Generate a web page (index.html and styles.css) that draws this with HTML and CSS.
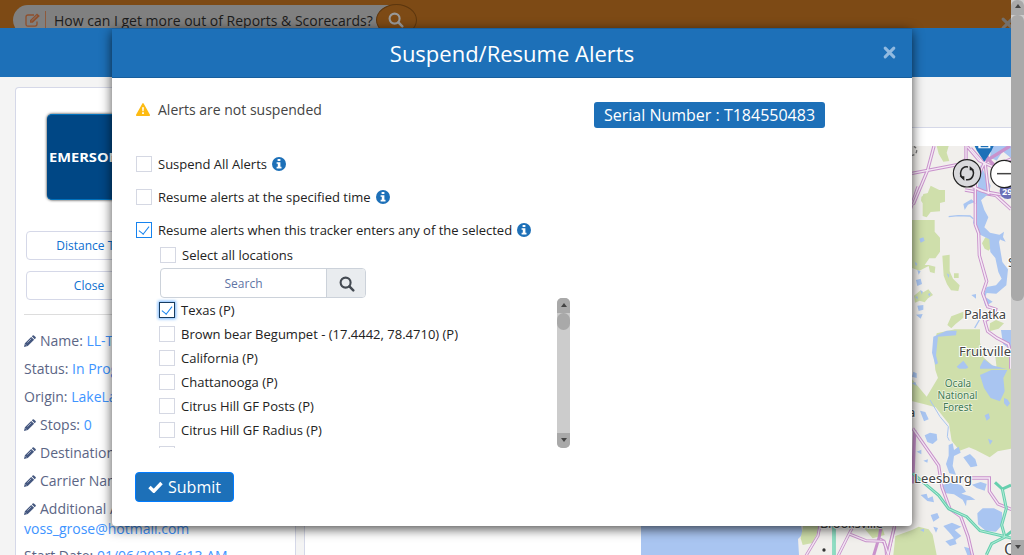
FILE: index.html
```html
<!DOCTYPE html>
<html lang="en">
<head>
<meta charset="utf-8">
<title>Suspend/Resume Alerts</title>
<link rel="stylesheet" href="styles.css">
</head>
<body>
<svg class="defs" width="0" height="0">
  <symbol id="pencil" viewBox="0 0 12 12"><path d="M0 12 L.9 8.2 L7.2 1.9 L10.1 4.8 L3.8 11.1Z M7.8 1.3 L8.7.4 Q9.3-.1 9.9.4 L11.6 2.1 Q12.1 2.7 11.6 3.3 L10.7 4.2Z" fill="currentColor"/><path d="M1.5 9.4 L2.6 10.5 M3.4 7.6 L7.2 3.8" stroke="#fff" stroke-width=".5"/></symbol>
  <symbol id="info" viewBox="0 0 14 14"><circle cx="7" cy="7" r="7" fill="#1d70b8"/><path d="M5.6 2h2.8v2.1H5.600z M4.600 5.200h3.800v4.600h1.100v1.700H4.600V9.800h1.200V6.800H4.600z" fill="#fff"/></symbol>
  <symbol id="glass" viewBox="0 0 16 16"><circle cx="6.6" cy="6.6" r="5" fill="none" stroke="currentColor" stroke-width="2.1"/><path d="M10.4 10.4L14.3 14.3" stroke="currentColor" stroke-width="2.5" stroke-linecap="round"/></symbol>
  <symbol id="cross" viewBox="0 0 12 12"><path d="M2 2L10 10M10 2L2 10" stroke="currentColor" stroke-width="2.8" stroke-linecap="round"/></symbol>
</svg>
<div class="screen">
  <div class="page">
    <div class="banner">
      <div class="ask">
        <svg class="edit" viewBox="0 0 16 14"><path d="M12 8.5v2.6q0 2-2 2H3q-2 0-2-2V4q0-2 2-2h6" fill="none" stroke="currentColor" stroke-width="1.3"/><path d="M5 9.8V7.2L12 .4l2.8 2.6-7 6.8z" fill="currentColor"/><path d="M6.5 7.9L12 2.6" stroke="#808080" stroke-width=".8"/></svg>
        <span class="bar"></span>
        <span class="question">How can I get more out of Reports &amp; Scorecards?</span>
        <span class="go"><svg viewBox="0 0 16 16"><use href="#glass"/></svg></span>
      </div>
      <svg class="dismiss" viewBox="0 0 12 12"><use href="#cross"/></svg>
    </div>
    <div class="topbar"></div>
    <div class="columns">
      <div class="card">
        <div class="logo"><span>EMERSON</span></div>
        <div class="pill">Distance Traveled</div>
        <div class="pill pill-close">Close</div>
        <hr>
        <div class="field"><svg><use href="#pencil"/></svg>Name: <b>LL-Tracker</b></div>
        <div class="field">Status: <b>In Progress</b></div>
        <div class="field">Origin: <b>LakeLand</b></div>
        <div class="field"><svg><use href="#pencil"/></svg>Stops: <b>0</b></div>
        <div class="field"><svg><use href="#pencil"/></svg>Destination:</div>
        <div class="field"><svg><use href="#pencil"/></svg>Carrier Name:</div>
        <div class="field"><svg><use href="#pencil"/></svg>Additional Alerts:</div>
        <div class="field email"><b>voss_grose@hotmail.com</b></div>
        <div class="field date">Start Date: <b>01/06/2023 6:13 AM</b></div>
      </div>
      <div class="panel">
        <div class="strip"></div>
        <div class="mapwrap">
          <svg class="map" viewBox="641 146 370 409">
            <rect x="641" y="146" width="370" height="409" fill="#f1efec"/>
            <path d="M641 500H804l-3 26 2 8-5 5 1 16H641z" fill="#a9c5f1"/>
            <g transform="translate(880 190) scale(.33333)">
              <g fill="#cfdfab">
                <path d="M130 12l18-4 2-8h45v35l-15 4v25l-28 2-12 16-12-4v-38l-5-8z"/>
                <path d="M90 90h74v35l16 18v42l-14 20h-18l-14 20h12l20 5-2 20-14-4-4-18-28 14-28-10zM187 197l22-3v50l10 22 20 20-4 17-22-2-12-18-10-26zM222 250h14v14h-14zM102 317l18-15 10 5 15-9 14 17-15 10-10 12-15-5-14 6zM202 405l12-26 36-14v18l-24 20-12 12zM306 160l10-18 18 6 4 18-12 16-12-6zM330 400l18-10 24 10-16 16-28 8z"/>
                <path d="M170 430l55-12h75v40l10 44 36 32 28-36 19 4v68H176l-10-30-6-60z"/>
                <path d="M345 490l24 10 25 40v30h-40z"/>
              </g>
              <g fill="#a9c5f1">
                <path d="M290-10l23 70 12 22-12 30 17 16 35 8-8 20 10 60 17 22-5 48-30 25-29-2-4 12 22 14-22 14-8-28 12-30 28-5 17-20-10-20-9-42-15-18-3-38-32-16-17-34 8-40-7-60z"/>
                <path d="M250 42l24-14 10 8-20 8-10 16zM358 135l14-10-3 16 8 14-16-6zM363 420h30v60l-24-18zM300 530l12-22 24 18 55 14v30H300zM230 530l20-18 15 20-18 14zM118 146l12-4 4 10-12 6zM108 270l14-4 4 16-14 6zM274 315l14-3v14zM112 347l18-2v14l-14 4zM108 374l20-2-6 14zM188 325l4 10M110 190l10 4M134 195l10-4M148 245l8 10"/>
                <path d="M104 215l8 6-4 8zM112 240l10 4-6 10zM120 300l8 4-2 10zM144 312l8-4-4 12zM106 322l6-4 2 10zM200 250l8 4-2 10zM100 545l10 5v14l-14-4z"/>
                <path d="M160 440l40-18 30 0-2 14-54 4-6 56 6 24-8 4-10-36z"/>
              </g>
              <path d="M206 80l28-3 36 1 10 8M298 390l-14 24" stroke="#a9c5f1" stroke-width="4" fill="none"/>
              <g fill="none" stroke="#c992cc" stroke-width="10"><path d="M286 0v104l10 26 2 66 22 78-12 36 15 40 24 8-6 20-27 14 9 32 28 20 34 18 7 25v80"/><path d="M255 0l92 16 46 42M114-10L90 60"/></g>
              <g fill="none" stroke="#f4e8f4" stroke-width="4.500"><path d="M286 0v104l10 26 2 66 22 78-12 36 15 40 24 8-6 20-27 14 9 32 28 20 34 18 7 25v80M255 0l92 16 46 42M114-10L90 60"/></g>
            </g>
            <g transform="translate(860 0) scale(.33333)">
              <path d="M230 438h36l-6 20 8 25-18 2-14-24zM184 590l18-8 10-25 32 16v27h-60z" fill="#cfdfab"/>
              <path d="M395 438h58v36l-25-20-18 28-20-10zM362 495l30 62-6 24-26 22h-12z" fill="#a9c5f1"/>
              <g fill="none" stroke="#c992cc" stroke-width="10"><path d="M318 438v40l-22 15-140 27M222 438l-20 75-42 100M322 440l36 42 40 18 60-25M332 445l44 50 10 85-58-24M346 610v-65l30-62M322 520q4 45 56 56l80 14M360 438l30 45 50 50M450 438l-80 50"/></g>
              <g fill="none" stroke="#f4e8f4" stroke-width="4"><path d="M318 438v40l-22 15-140 27M222 438l-20 75-42 100M322 440l36 42 40 18 60-25M332 445l44 50 10 85-58-24M346 610v-65l30-62M322 520q4 45 56 56l80 14"/></g>
              <circle cx="156" cy="452" r="14" fill="#e8e6e2" stroke="#777" stroke-width="4" stroke-dasharray="8 6"/>
              <circle cx="443" cy="573" r="24" fill="#6b70b7"/>
              <path d="M344 438h57l-7 15-21 32-23-34z" fill="#1d70b8"/><path d="M355 438h7v4h23v-4h6v7h-36z" fill="#fff"/>
              <circle cx="321" cy="520" r="41" fill="#d9d9dc" stroke="#222" stroke-width="3.500"/>
              <path d="M311 536A19 19 0 0 1 324 501M331 504A19 19 0 0 1 318 539" fill="none" stroke="#222" stroke-width="4.500"/><path d="M299 529l14 0 0 13zM343 511h-14v-13z" fill="#222"/>
              <circle cx="433" cy="522" r="41" fill="#fff" stroke="#222" stroke-width="3.500"/><path d="M411 521h48" stroke="#444" stroke-width="4.500"/>
            </g>
            <g transform="translate(880 370) scale(.33333)">
              <path d="M90 20l50 60 36-60-4-24h221v240l-40 8-24 18-42-22-20-8-28 10-24-30-8-50-40-50-36-10-40-10zM46 498l50-18 20-10 30 8 12 16 12 61H40z" fill="#cfdfab"/>
              <g fill="#a9c5f1">
                <path d="M300 15l34-15h48l-12 24 4 40-14 30-28-10-20-30zM372 84l10 4 8 12-8 10-10-10zM314 136l12-6 4 14-10 8zM324 206l14 6-8 12zM120 122l16 4 10 22-14 6zM134 196l16-8 20 4 2 18-14 12-16-6zM110 245l14-6v14zM130 272l14-4-2 10z"/>
                <path d="M206 225l12-5 4 20 14-10 6 18-20 10-4 30 10 26-20-4-10-28 8-25zM250 262l20-10 16 16 6 20-20 4-10-14zM186 345l34-8 26 10 12 18-14 6 26 8 16 10-26 2-2 18-10-20-26-16-30-4zM276 344l26-8 18 6-6 20-24-8zM292 430l16-15 34 0 24 12 2 36-20 22-30-2-24-20zM122 375l18-4 4 14 14-6 4 18-20-4zM152 435l20-6 6 14-18 12zM190 468l26-10 28 12-20 10 20 18-18 12-14-18zM196 514l28-10 6 18-20 6zM252 530l22 6 8 19h-20zM160 470l14 4-6 14zM96 40l10-4 4 12zM120 480l12-4v10z"/>
              </g>
              <path d="M150 90l30 50 25 30-3 30 6 12" fill="none" stroke="#a9c5f1" stroke-width="3"/>
              <g fill="none" stroke="#c992cc" stroke-width="10"><path d="M98 175l78 112 10 65 24 65 32 22 22 60 14 60M270 324h58v40l26 38 40 16M104 180l-6 160M44 470l-24 90M0 508q20 5 20 50"/></g>
              <g fill="none" stroke="#f4e8f4" stroke-width="4"><path d="M98 175l78 112 10 65 24 65 32 22 22 60 14 60M270 324h58v40l26 38 40 16M44 470l-24 90M0 508q20 5 20 50"/></g>
              <g fill="none" stroke="#66cfae" stroke-width="9"><path d="M98 310l78 66 30 40 54 24 40 42 94 22M393 345l-26 12-22-20M367 357l12 58-14 50 10 36-40 20-16 34M375 500l20-16"/></g>
              <path d="M98 310l78 66 30 40 54 24 40 42 94 22M367 357l12 58-14 50 10 36-40 20-16 34" fill="none" stroke="#b4ecd8" stroke-width="3"/>
            </g>
            <g transform="translate(600 500) scale(.33333)">
              <path d="M610 75h46l-6 28-12 26-30 6-6-20zM784 75h60l10 30-36 10z" fill="#cfdfab"/>
              <g fill="none" stroke="#c992cc" stroke-width="9"><path d="M660 75l-6 32-36 60M762 75l-14 25-34 68M748 102l50 20 54 2 14 44M844 75l-6 35-18 60M884 75l-20 92"/></g>
              <path d="M660 75l-6 32-36 60M762 75l-14 25-34 68M748 102l50 20 54 2 14 44M884 75l-20 92" fill="none" stroke="#f4e8f4" stroke-width="4"/>
              <path d="M702 75v90" stroke="#66cfae" stroke-width="10"/><path d="M702 75v90" stroke="#b4ecd8" stroke-width="3"/>
              <circle cx="672" cy="150" r="5" fill="#333"/>
            </g>
            <g class="places">
              <text x="964" y="319" textLength="42">Palatka</text>
              <text x="959" y="356" textLength="52">Fruitville</text>
              <text x="914" y="483" textLength="58">Leesburg</text>
              <text x="820" y="528" textLength="63">Brooksville</text>
              <text x="908" y="417">a</text>
              <text x="1008" y="267">S</text>
              <text x="1004" y="555" class="big">O</text>
            </g>
            <g class="forest"><text x="958" y="387">Ocala</text><text x="957.500" y="399">National</text><text x="957.500" y="411">Forest</text></g>
            <text x="1002" y="195" class="route">295</text>
          </svg>
        </div>
      </div>
    </div>
  </div>

  <div class="mainscroll">
    <div class="track"><div class="thumb"></div></div>
    <div class="down"></div>
  </div>

  <div class="modal">
    <div class="head"><h1>Suspend/Resume Alerts</h1><svg class="x" viewBox="0 0 12 12"><use href="#cross"/></svg></div>
    <div class="body">
      <div class="status">
        <svg viewBox="0 0 14 13"><path d="M7 .8L13.300 12.200H.7z" fill="#fdbb13" stroke="#fdbb13" stroke-width="1.500" stroke-linejoin="round"/><path d="M6.100 4.200h1.800L7.600 8.300H6.400zM6.100 9.200h1.800v1.700H6.100z" fill="#fff"/></svg>
        <span class="state">Alerts are not suspended</span>
        <span class="serial"><span>Serial Number : T184550483</span></span>
      </div>
      <div class="opt"><i class="box"></i><span>Suspend All Alerts</span><svg><use href="#info"/></svg></div>
      <div class="opt"><i class="box"></i><span>Resume alerts at the specified time</span><svg><use href="#info"/></svg></div>
      <div class="opt"><i class="box on"></i><span>Resume alerts when this tracker enters any of the selected</span><svg><use href="#info"/></svg></div>
      <div class="nested">
        <div class="all"><i class="box"></i><span>Select all locations</span></div>
        <div class="search"><div class="input">Search</div><div class="btn"><svg viewBox="0 0 16 16"><use href="#glass"/></svg></div></div>
        <div class="list">
          <div class="rows">
            <div class="row"><i class="box on focus"></i><span>Texas (P)</span></div>
            <div class="row"><i class="box"></i><span>Brown bear Begumpet - (17.4442, 78.4710) (P)</span></div>
            <div class="row"><i class="box"></i><span>California (P)</span></div>
            <div class="row"><i class="box"></i><span>Chattanooga (P)</span></div>
            <div class="row"><i class="box"></i><span>Citrus Hill GF Posts (P)</span></div>
            <div class="row"><i class="box"></i><span>Citrus Hill GF Radius (P)</span></div>
            <div class="row"><i class="box"></i></div>
          </div>
          <div class="scroll"><div class="up"></div><div class="knob"></div><div class="down"></div></div>
        </div>
      </div>
      <div class="submit"><svg viewBox="0 0 15 12"><path d="M1.500 6L5.800 10.200L13.500 2" fill="none" stroke="#fff" stroke-width="3.400"/></svg><span>Submit</span></div>
    </div>
  </div>
</div>
</body>
</html>
```
FILE: styles.css
```css
* { box-sizing: border-box; }
body { margin: 0; font-family: "Open Sans", "Noto Sans", sans-serif; overflow: hidden; }
.defs { position: absolute; }
.screen { position: relative; width: 1024px; height: 555px; overflow: hidden; background: #f4f4f4; }
.page { width: 1011px; height: 555px; overflow: hidden; }
.banner { height: 28px; background: #7d4a15; display: flex; justify-content: space-between; overflow: hidden; padding-left: 13px; width: 1024px; }
.ask { display: flex; align-items: center; height: 30px; width: 404px; margin-top: 5px; padding-left: 12px; border-radius: 15px; background: linear-gradient(90deg, #808080 385px, transparent 385px); }
.edit { width: 16px; height: 14px; color: #8e4f2c; flex: none; }
.bar { width: 1px; height: 18px; background: #8e5a3c; margin: 0 8px 0 4px; }
.question { font-size: 14px; color: #1c1c1c; white-space: nowrap; width: 322px; }
.go { flex: none; display: flex; align-items: center; justify-content: center; width: 41px; height: 32px; border-radius: 50%; background: #7d4a15; border: 1px solid #5c360e; padding-right: 2px; }
.go svg { width: 16px; height: 16px; color: #999; }
.dismiss { width: 13px; height: 13px; margin: 17px 10px 0 0; color: #74706b; }
.topbar { height: 49px; background: #1d70b8; }
.columns { display: flex; height: 478px; }
.card { flex: none; width: 281px; margin: 10px 8px 0 15px; border: 1px solid #d5d8e8; border-bottom: 0; border-radius: 4px 4px 0 0; background: #fff; padding: 26px 8px 0; overflow: hidden; }
.logo { width: 200px; height: 86px; margin: 0 0 31px 23px; border-radius: 5px; background: #004785; border: solid #0071bd; border-width: 1px 0; box-shadow: 0 0 3px #222; color: #fff; font: 700 12px/85px "Open Sans", sans-serif; padding-left: 2px; }
.logo span { display: inline-block; transform: scaleX(1.22); transform-origin: left; }
.pill { width: 160px; height: 29px; margin: 0 0 11px 2px; border: 1px solid #d5d8e8; border-radius: 4px; color: #0d6fd0; font-size: 12px; line-height: 27px; text-align: center; white-space: nowrap; }
.pill-close { width: 126px; }
.card hr { border: 0; border-top: 1px solid #ddd; margin: 14px 0 12px; }
.field { height: 28px; line-height: 28px; font-size: 14px; color: #5b6585; white-space: nowrap; }
.field b { font-weight: 400; color: #3e94ff; }
.field svg { width: 12px; height: 12px; margin-right: 4px; vertical-align: -1px; color: #44577f; }
.email { height: 12px; line-height: 12px; }
.date { line-height: 42px; }
.panel { flex: 1; border-left: 1px solid #d5d8e8; background: #fff; }
.strip { height: 51px; background: #f4f4f4; border-bottom: 1px solid #d5d8e8; }
.mapwrap { padding: 18px 0 0 336px; }
.map { display: block; width: 370px; height: 409px; }
.places { font: 13px "Noto Sans", sans-serif; fill: #444; stroke: #fff; stroke-width: 2px; paint-order: stroke; }
.places .big { font-size: 16px; }
.forest { font: 10px "Noto Sans", sans-serif; fill: #417a55; stroke: #eef4e0; stroke-width: 1.5px; paint-order: stroke; text-anchor: middle; }
.route { font: 700 9px "Noto Sans", sans-serif; fill: #fff; }

.mainscroll { position: absolute; right: 0; top: 0; width: 13px; height: 555px; background: #ccc; display: flex; flex-direction: column; justify-content: space-between; }
.track { position: relative; height: 301px; padding-top: 15px; border-radius: 6px; background: linear-gradient(#a9a9a9 15px, #ccc 15px); }
.thumb { height: 286px; border-radius: 6px; background: #a9a9a9; }
.track::before, .up::before, .down::before { content: ""; position: absolute; left: 50%; top: 50%; margin: -3px 0 0 -3px; border: solid transparent; border-width: 0 3px 4px; border-bottom-color: #444; }
.track::before { top: 7px; }
.down { position: relative; height: 15px; background: #a9a9a9; }
.down::before { border-width: 4px 3px 0; border-top-color: #444; }

.modal { position: absolute; left: 112px; top: 28px; width: 800px; height: 498px; background: #fff; border-radius: 4px; box-shadow: 0 3px 12px rgba(0,0,0,.7); }
.head { display: flex; align-items: center; height: 50px; background: #1d70b8; border: solid #185f9d; border-width: 1px 0; padding-right: 16px; }
.head h1 { flex: 1; margin: 0 0 0 29px; font: 400 22px/48px "Open Sans", sans-serif; color: #fff; text-align: center; }
.head .x { width: 13px; height: 13px; color: #91bae0; margin-bottom: 2px; }
.body { padding: 17px 0 0 24px; font-size: 13px; color: #222; }
.status { display: flex; align-items: center; height: 40px; margin-bottom: 12px; }
.status svg { width: 14px; height: 13px; margin: 0 8px 11px 0; }
.state { font-size: 14px; color: #444; width: 436px; padding-bottom: 11px; white-space: nowrap; }
.serial { width: 231px; height: 26px; border-radius: 3px; background: #1d70b8; color: #fff; font-size: 16px; line-height: 26px; text-align: center; white-space: nowrap; }
.opt { display: flex; align-items: center; height: 33px; white-space: nowrap; }
.opt svg { width: 14px; height: 14px; margin-left: 5px; }
.box { flex: none; width: 16px; height: 16px; border: 1px solid #d5d8e3; background: #fff; margin-right: 6px; }
.on { border-color: #1683ef; position: relative; }
.on::after { content: ""; position: absolute; left: 4px; top: 1px; width: 5px; height: 9px; border: solid #1683ef; border-width: 0 1.5px 1.5px 0; transform: rotate(38deg); }
.focus { border-color: #173b5f; box-shadow: 0 0 3px 1px #75b6ff; }
.nested { margin-left: 23px; }
.all { display: flex; align-items: center; height: 17px; margin: 0 0 5px 1px; }
.search { display: flex; width: 206px; height: 30px; margin-left: 1px; border: 1px solid #ccd2da; border-radius: 4px; overflow: hidden; }
.input { flex: 1; text-align: center; color: #5f75a5; font-size: 12px; line-height: 29px; }
.search .btn { width: 39px; display: flex; align-items: center; justify-content: center; background: #e9ecef; border-left: 1px solid #ccd2da; color: #454b53; }
.btn svg { width: 16px; height: 16px; margin: 1px 0 0 1px; }
.list { display: flex; justify-content: space-between; width: 411px; height: 150px; }
.rows { margin-left: -3px; padding-left: 3px; overflow: hidden; white-space: nowrap; }
.row { display: flex; align-items: center; height: 24px; }
.scroll { width: 13px; height: 150px; background: #ccc; border-radius: 5px; overflow: hidden; display: flex; flex-direction: column; }
.up { position: relative; height: 15px; background: #a9a9a9; }
.knob { height: 17px; border-radius: 7px; background: #a9a9a9; margin-bottom: auto; }
.submit { display: flex; align-items: center; width: 99px; height: 30px; margin: 24px 0 0 -1px; padding-left: 12px; gap: 5px; background: #1d70b8; border: 1px solid #007bff; border-radius: 4px; color: #fff; font-size: 16px; }
.submit svg { width: 15px; height: 12px; }
```
